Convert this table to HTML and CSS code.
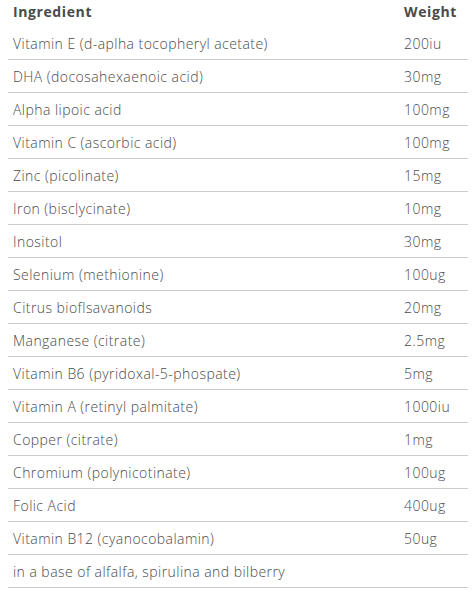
FILE: index.html
```html
<!DOCTYPE html>
<html>
<head>
<meta charset="utf-8">
<link rel="stylesheet" href="styles.css">
</head>
<body>
<div class="ingredients">
  <div class="row head"><div class="name">Ingredient</div><div class="weight">Weight</div></div>
  <div class="row"><div class="name">Vitamin E (d-aplha tocopheryl acetate)</div><div class="weight">200iu</div></div>
  <div class="row"><div class="name">DHA (docosahexaenoic acid)</div><div class="weight">30mg</div></div>
  <div class="row"><div class="name">Alpha lipoic acid</div><div class="weight">100mg</div></div>
  <div class="row"><div class="name">Vitamin C (ascorbic acid)</div><div class="weight">100mg</div></div>
  <div class="row"><div class="name">Zinc (picolinate)</div><div class="weight">15mg</div></div>
  <div class="row"><div class="name">Iron (bisclycinate)</div><div class="weight">10mg</div></div>
  <div class="row"><div class="name">Inositol</div><div class="weight">30mg</div></div>
  <div class="row"><div class="name">Selenium (methionine)</div><div class="weight">100ug</div></div>
  <div class="row"><div class="name">Citrus bioflsavanoids</div><div class="weight">20mg</div></div>
  <div class="row"><div class="name">Manganese (citrate)</div><div class="weight">2.5mg</div></div>
  <div class="row"><div class="name">Vitamin B6 (pyridoxal-5-phospate)</div><div class="weight">5mg</div></div>
  <div class="row"><div class="name">Vitamin A (retinyl palmitate)</div><div class="weight">1000iu</div></div>
  <div class="row"><div class="name">Copper (citrate)</div><div class="weight">1mg</div></div>
  <div class="row"><div class="name">Chromium (polynicotinate)</div><div class="weight">100ug</div></div>
  <div class="row"><div class="name">Folic Acid</div><div class="weight">400ug</div></div>
  <div class="row"><div class="name">Vitamin B12 (cyanocobalamin)</div><div class="weight">50ug</div></div>
  <div class="row"><div class="name">in a base of alfalfa, spirulina and bilberry</div><div class="weight"></div></div>
</div>
</body>
</html>
```

FILE: styles.css
```css
html, body {
  margin: 0;
  padding: 0;
  background: #ffffff;
}
body {
  padding: 0 8px;
  font-family: "Open Sans", Arial, sans-serif;
  font-size: 14px;
  font-weight: 300;
  color: #4a4a4a;
}
.ingredients {
  width: 460px;
  display: flex;
  flex-direction: column;
}
.row {
  display: flex;
  align-items: center;
  height: 32px;
  border-bottom: 1px solid #cccccc;
  letter-spacing: 0.45px;
}
.row.head {
  height: 27px;
  border-bottom: none;
  font-weight: bold;
  color: #4a4a4a;
  letter-spacing: 0.6px;
  padding-bottom: 4px;
  box-sizing: border-box;
}
.name {
  flex: 1;
  padding-left: 5px;
}
.weight {
  width: 64px;
}
```
